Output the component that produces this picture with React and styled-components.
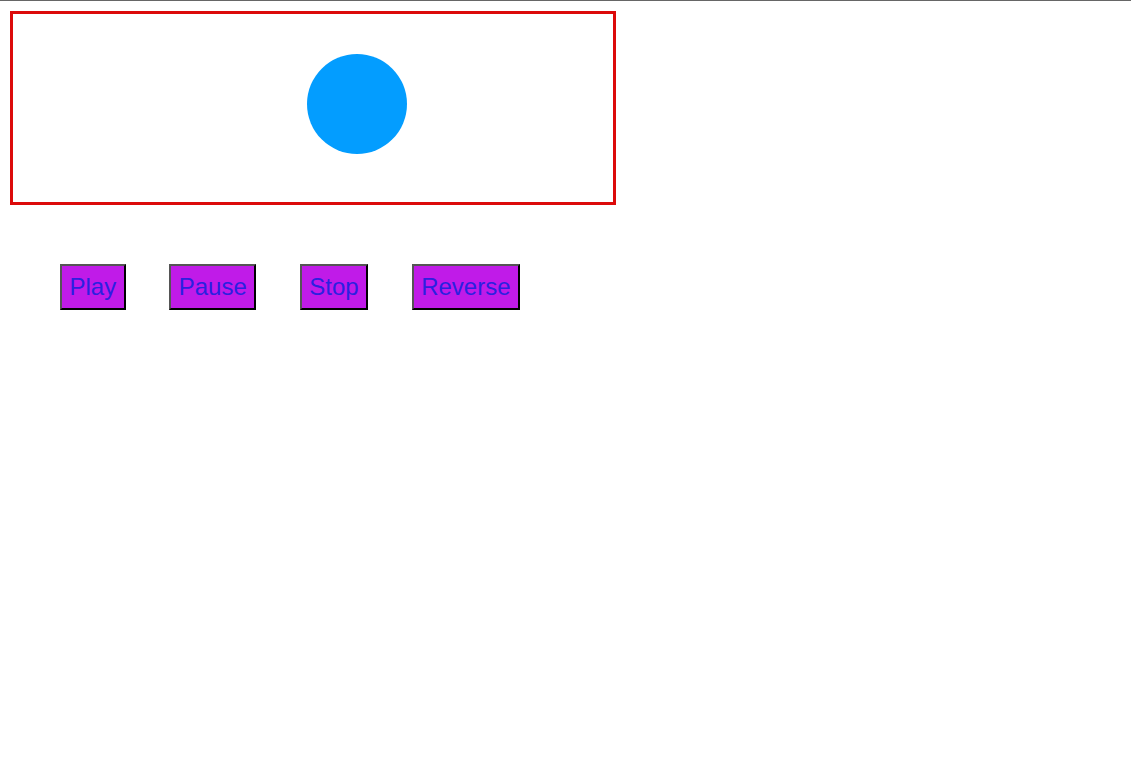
import React from "react";
import styled, { createGlobalStyle } from "styled-components";

const Global = createGlobalStyle`
  html, body { margin: 0; padding: 0; background: #fff; }
  body { font-family: "Liberation Sans", Arial, sans-serif; }
`;

const Page = styled.div`
  border-top: 1px solid #666;
  padding: 10px 10px 0 10px;
`;

const Stage = styled.div`
  position: relative;
  width: 600px;
  height: 188px;
  border: 3px solid #dc0a0a;
`;

const Ball = styled.div`
  position: absolute;
  width: 100px;
  height: 100px;
  border-radius: 50%;
  background: #039dff;
`;

const Toolbar = styled.div`
  display: flex;
  align-items: flex-start;
  gap: 43.5px;
  margin: 59px 0 0 50px;
`;

const Button = styled.button`
  box-sizing: border-box;
  height: 46px;
  padding: 0 7.5px;
  font-family: "Liberation Sans", Arial, sans-serif;
  font-size: 24px;
  line-height: 1;
  color: #2b20e0;
  background: #c01be8;
  border: 2px solid;
  border-color: #555 #000 #000 #555;
  cursor: pointer;
`;

export default function App() {
  return (
    <>
      <Global />
      <Page>
        <Stage>
          <Ball style={{ left: 294, top: 40 }} />
        </Stage>
        <Toolbar>
          <Button>Play</Button>
          <Button>Pause</Button>
          <Button>Stop</Button>
          <Button>Reverse</Button>
        </Toolbar>
      </Page>
    </>
  );
}
